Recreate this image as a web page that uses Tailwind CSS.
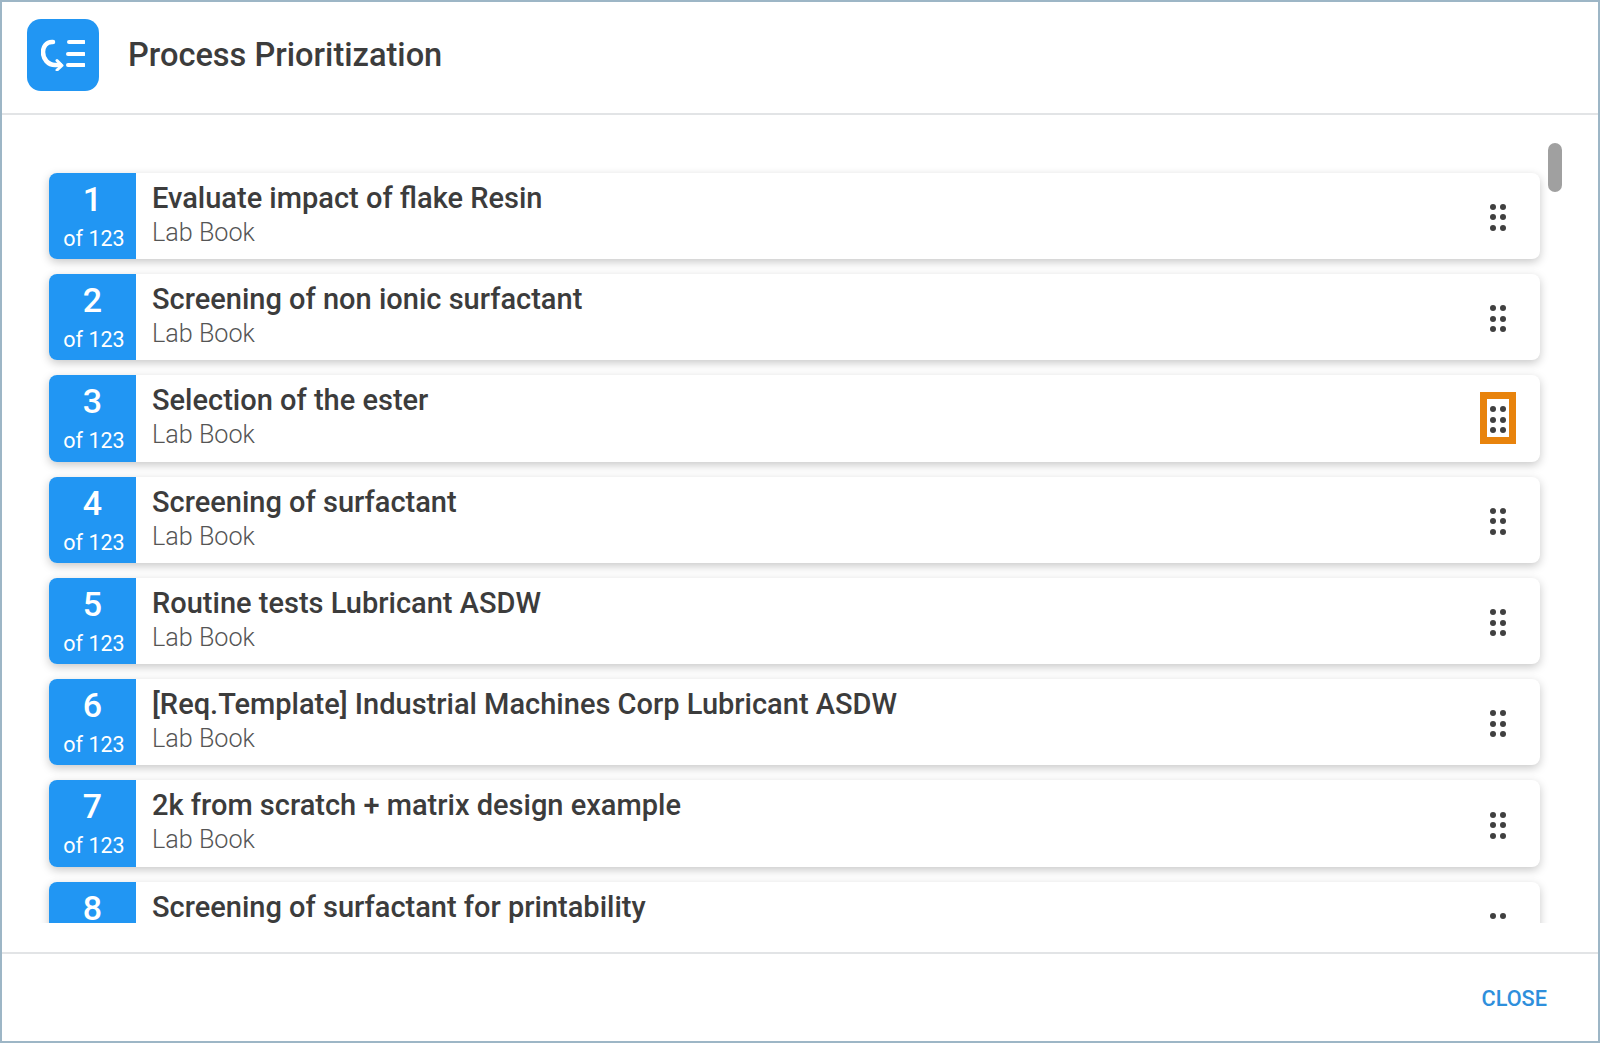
<!DOCTYPE html>
<html lang="en">
<head>
    <meta charset="UTF-8">
    <title>Process Prioritization</title>
    <script src="https://cdn.jsdelivr.net/npm/@tailwindcss/browser@4"></script>
</head>
<body class="bg-white">
    <div class="w-[1600px] h-[1043px] flex flex-col border-2 border-[#9db6c6] bg-white font-['Roboto',sans-serif] text-[#3c3c3c] overflow-hidden">
        <div class="h-[113px] shrink-0 flex items-start pt-[17px] pl-[25px] gap-[29px] border-b-2 border-[#e2e4e6]">
            <div class="w-[72px] h-[72px] rounded-[14px] bg-[#2196f3] flex items-center justify-center">
                <svg width="44" height="32" viewBox="0 0 44 32" fill="none" stroke="white" stroke-width="4" stroke-linecap="round" stroke-linejoin="round">
                    <path d="M12 3 H11 C5 3 2 8 2 13 C2 20 7 26 14 26 H19" stroke-width="4.5"/>
                    <path d="M16 21.5 L21 26.5 L16 31" stroke-width="3"/>
                    <path d="M28 3 H43 M27 15 H43 M27 26 H43"/>
                </svg>
            </div>
            <h1 class="text-[32.6px] font-medium leading-[72px]">Process Prioritization</h1>
        </div>

        <div class="relative h-[808px] shrink-0 overflow-hidden pt-[57.7px] pl-[47px] pr-[58px] flex flex-col gap-[15px]">
            <div class="h-[86.3px] shrink-0 flex bg-white rounded-lg overflow-hidden shadow-[0_3px_10px_rgba(0,0,0,0.22)]">
                <div class="w-[87px] shrink-0 bg-[#2196f3] text-white flex flex-col items-center pt-[8px]">
                    <span class="text-[34px] font-medium leading-[36px]">1</span>
                    <span class="text-[21.5px] leading-[30px] mt-[7px] pl-[3px]">of 123</span>
                </div>
                <div class="flex-1 pl-[16px] pt-[7px]">
                    <div class="text-[29px] font-medium leading-[36px]">Evaluate impact of flake Resin</div>
                    <div class="text-[25.2px] font-light leading-[32px] mt-[1px] text-[#555]">Lab Book</div>
                </div>
                <div class="w-[86px] shrink-0 flex items-center justify-center pt-[3px] pl-[2px]">
                    <div class="grid grid-cols-2 gap-x-1 gap-y-[4.5px]">
                        <i class="w-1.5 h-1.5 rounded-full bg-[#404040]"></i><i class="w-1.5 h-1.5 rounded-full bg-[#404040]"></i>
                        <i class="w-1.5 h-1.5 rounded-full bg-[#404040]"></i><i class="w-1.5 h-1.5 rounded-full bg-[#404040]"></i>
                        <i class="w-1.5 h-1.5 rounded-full bg-[#404040]"></i><i class="w-1.5 h-1.5 rounded-full bg-[#404040]"></i>
                    </div>
                </div>
            </div>
            <div class="h-[86.3px] shrink-0 flex bg-white rounded-lg overflow-hidden shadow-[0_3px_10px_rgba(0,0,0,0.22)]">
                <div class="w-[87px] shrink-0 bg-[#2196f3] text-white flex flex-col items-center pt-[8px]">
                    <span class="text-[34px] font-medium leading-[36px]">2</span>
                    <span class="text-[21.5px] leading-[30px] mt-[7px] pl-[3px]">of 123</span>
                </div>
                <div class="flex-1 pl-[16px] pt-[7px]">
                    <div class="text-[29px] font-medium leading-[36px]">Screening of non ionic surfactant</div>
                    <div class="text-[25.2px] font-light leading-[32px] mt-[1px] text-[#555]">Lab Book</div>
                </div>
                <div class="w-[86px] shrink-0 flex items-center justify-center pt-[3px] pl-[2px]">
                    <div class="grid grid-cols-2 gap-x-1 gap-y-[4.5px]">
                        <i class="w-1.5 h-1.5 rounded-full bg-[#404040]"></i><i class="w-1.5 h-1.5 rounded-full bg-[#404040]"></i>
                        <i class="w-1.5 h-1.5 rounded-full bg-[#404040]"></i><i class="w-1.5 h-1.5 rounded-full bg-[#404040]"></i>
                        <i class="w-1.5 h-1.5 rounded-full bg-[#404040]"></i><i class="w-1.5 h-1.5 rounded-full bg-[#404040]"></i>
                    </div>
                </div>
            </div>
            <div class="h-[86.3px] shrink-0 flex bg-white rounded-lg overflow-hidden shadow-[0_3px_10px_rgba(0,0,0,0.22)]">
                <div class="w-[87px] shrink-0 bg-[#2196f3] text-white flex flex-col items-center pt-[8px]">
                    <span class="text-[34px] font-medium leading-[36px]">3</span>
                    <span class="text-[21.5px] leading-[30px] mt-[7px] pl-[3px]">of 123</span>
                </div>
                <div class="flex-1 pl-[16px] pt-[7px]">
                    <div class="text-[29px] font-medium leading-[36px]">Selection of the ester</div>
                    <div class="text-[25.2px] font-light leading-[32px] mt-[1px] text-[#555]">Lab Book</div>
                </div>
                <div class="w-[86px] shrink-0 flex items-center justify-center pl-[2px]">
                    <div class="w-[36px] h-[52px] border-[7px] border-[#e8830c] flex items-center justify-center pt-[3px]">
                        <div class="grid grid-cols-2 gap-x-1 gap-y-[4.5px]">
                            <i class="w-1.5 h-1.5 rounded-full bg-[#404040]"></i><i class="w-1.5 h-1.5 rounded-full bg-[#404040]"></i>
                            <i class="w-1.5 h-1.5 rounded-full bg-[#404040]"></i><i class="w-1.5 h-1.5 rounded-full bg-[#404040]"></i>
                            <i class="w-1.5 h-1.5 rounded-full bg-[#404040]"></i><i class="w-1.5 h-1.5 rounded-full bg-[#404040]"></i>
                        </div>
                    </div>
                </div>
            </div>
            <div class="h-[86.3px] shrink-0 flex bg-white rounded-lg overflow-hidden shadow-[0_3px_10px_rgba(0,0,0,0.22)]">
                <div class="w-[87px] shrink-0 bg-[#2196f3] text-white flex flex-col items-center pt-[8px]">
                    <span class="text-[34px] font-medium leading-[36px]">4</span>
                    <span class="text-[21.5px] leading-[30px] mt-[7px] pl-[3px]">of 123</span>
                </div>
                <div class="flex-1 pl-[16px] pt-[7px]">
                    <div class="text-[29px] font-medium leading-[36px]">Screening of surfactant</div>
                    <div class="text-[25.2px] font-light leading-[32px] mt-[1px] text-[#555]">Lab Book</div>
                </div>
                <div class="w-[86px] shrink-0 flex items-center justify-center pt-[3px] pl-[2px]">
                    <div class="grid grid-cols-2 gap-x-1 gap-y-[4.5px]">
                        <i class="w-1.5 h-1.5 rounded-full bg-[#404040]"></i><i class="w-1.5 h-1.5 rounded-full bg-[#404040]"></i>
                        <i class="w-1.5 h-1.5 rounded-full bg-[#404040]"></i><i class="w-1.5 h-1.5 rounded-full bg-[#404040]"></i>
                        <i class="w-1.5 h-1.5 rounded-full bg-[#404040]"></i><i class="w-1.5 h-1.5 rounded-full bg-[#404040]"></i>
                    </div>
                </div>
            </div>
            <div class="h-[86.3px] shrink-0 flex bg-white rounded-lg overflow-hidden shadow-[0_3px_10px_rgba(0,0,0,0.22)]">
                <div class="w-[87px] shrink-0 bg-[#2196f3] text-white flex flex-col items-center pt-[8px]">
                    <span class="text-[34px] font-medium leading-[36px]">5</span>
                    <span class="text-[21.5px] leading-[30px] mt-[7px] pl-[3px]">of 123</span>
                </div>
                <div class="flex-1 pl-[16px] pt-[7px]">
                    <div class="text-[29px] font-medium leading-[36px]">Routine tests Lubricant ASDW</div>
                    <div class="text-[25.2px] font-light leading-[32px] mt-[1px] text-[#555]">Lab Book</div>
                </div>
                <div class="w-[86px] shrink-0 flex items-center justify-center pt-[3px] pl-[2px]">
                    <div class="grid grid-cols-2 gap-x-1 gap-y-[4.5px]">
                        <i class="w-1.5 h-1.5 rounded-full bg-[#404040]"></i><i class="w-1.5 h-1.5 rounded-full bg-[#404040]"></i>
                        <i class="w-1.5 h-1.5 rounded-full bg-[#404040]"></i><i class="w-1.5 h-1.5 rounded-full bg-[#404040]"></i>
                        <i class="w-1.5 h-1.5 rounded-full bg-[#404040]"></i><i class="w-1.5 h-1.5 rounded-full bg-[#404040]"></i>
                    </div>
                </div>
            </div>
            <div class="h-[86.3px] shrink-0 flex bg-white rounded-lg overflow-hidden shadow-[0_3px_10px_rgba(0,0,0,0.22)]">
                <div class="w-[87px] shrink-0 bg-[#2196f3] text-white flex flex-col items-center pt-[8px]">
                    <span class="text-[34px] font-medium leading-[36px]">6</span>
                    <span class="text-[21.5px] leading-[30px] mt-[7px] pl-[3px]">of 123</span>
                </div>
                <div class="flex-1 pl-[16px] pt-[7px]">
                    <div class="text-[29px] font-medium leading-[36px]">[Req.Template] Industrial Machines Corp Lubricant ASDW</div>
                    <div class="text-[25.2px] font-light leading-[32px] mt-[1px] text-[#555]">Lab Book</div>
                </div>
                <div class="w-[86px] shrink-0 flex items-center justify-center pt-[3px] pl-[2px]">
                    <div class="grid grid-cols-2 gap-x-1 gap-y-[4.5px]">
                        <i class="w-1.5 h-1.5 rounded-full bg-[#404040]"></i><i class="w-1.5 h-1.5 rounded-full bg-[#404040]"></i>
                        <i class="w-1.5 h-1.5 rounded-full bg-[#404040]"></i><i class="w-1.5 h-1.5 rounded-full bg-[#404040]"></i>
                        <i class="w-1.5 h-1.5 rounded-full bg-[#404040]"></i><i class="w-1.5 h-1.5 rounded-full bg-[#404040]"></i>
                    </div>
                </div>
            </div>
            <div class="h-[86.3px] shrink-0 flex bg-white rounded-lg overflow-hidden shadow-[0_3px_10px_rgba(0,0,0,0.22)]">
                <div class="w-[87px] shrink-0 bg-[#2196f3] text-white flex flex-col items-center pt-[8px]">
                    <span class="text-[34px] font-medium leading-[36px]">7</span>
                    <span class="text-[21.5px] leading-[30px] mt-[7px] pl-[3px]">of 123</span>
                </div>
                <div class="flex-1 pl-[16px] pt-[7px]">
                    <div class="text-[29px] font-medium leading-[36px]">2k from scratch + matrix design example</div>
                    <div class="text-[25.2px] font-light leading-[32px] mt-[1px] text-[#555]">Lab Book</div>
                </div>
                <div class="w-[86px] shrink-0 flex items-center justify-center pt-[3px] pl-[2px]">
                    <div class="grid grid-cols-2 gap-x-1 gap-y-[4.5px]">
                        <i class="w-1.5 h-1.5 rounded-full bg-[#404040]"></i><i class="w-1.5 h-1.5 rounded-full bg-[#404040]"></i>
                        <i class="w-1.5 h-1.5 rounded-full bg-[#404040]"></i><i class="w-1.5 h-1.5 rounded-full bg-[#404040]"></i>
                        <i class="w-1.5 h-1.5 rounded-full bg-[#404040]"></i><i class="w-1.5 h-1.5 rounded-full bg-[#404040]"></i>
                    </div>
                </div>
            </div>
            <div class="h-[86.3px] shrink-0 flex bg-white rounded-lg overflow-hidden shadow-[0_3px_10px_rgba(0,0,0,0.22)]">
                <div class="w-[87px] shrink-0 bg-[#2196f3] text-white flex flex-col items-center pt-[8px]">
                    <span class="text-[34px] font-medium leading-[36px]">8</span>
                    <span class="text-[21.5px] leading-[30px] mt-[7px] pl-[3px]">of 123</span>
                </div>
                <div class="flex-1 pl-[16px] pt-[7px]">
                    <div class="text-[29px] font-medium leading-[36px]">Screening of surfactant for printability</div>
                    <div class="text-[25.2px] font-light leading-[32px] mt-[1px] text-[#555]">Lab Book</div>
                </div>
                <div class="w-[86px] shrink-0 flex items-center justify-center pt-[3px] pl-[2px]">
                    <div class="grid grid-cols-2 gap-x-1 gap-y-[4.5px]">
                        <i class="w-1.5 h-1.5 rounded-full bg-[#404040]"></i><i class="w-1.5 h-1.5 rounded-full bg-[#404040]"></i>
                        <i class="w-1.5 h-1.5 rounded-full bg-[#404040]"></i><i class="w-1.5 h-1.5 rounded-full bg-[#404040]"></i>
                        <i class="w-1.5 h-1.5 rounded-full bg-[#404040]"></i><i class="w-1.5 h-1.5 rounded-full bg-[#404040]"></i>
                    </div>
                </div>
            </div>
            <div class="absolute right-[36px] top-[28px] w-[14px] h-[49px] rounded-full bg-[#a0a0a0]"></div>
        </div>

        <div class="flex-1 mt-[29px] border-t-2 border-[#e2e4e6] flex items-center justify-end pr-[51px] pt-[3px]">
            <button class="text-[21.7px] font-medium text-[#2e8fdc]">CLOSE</button>
        </div>
    </div>
</body>
</html>
